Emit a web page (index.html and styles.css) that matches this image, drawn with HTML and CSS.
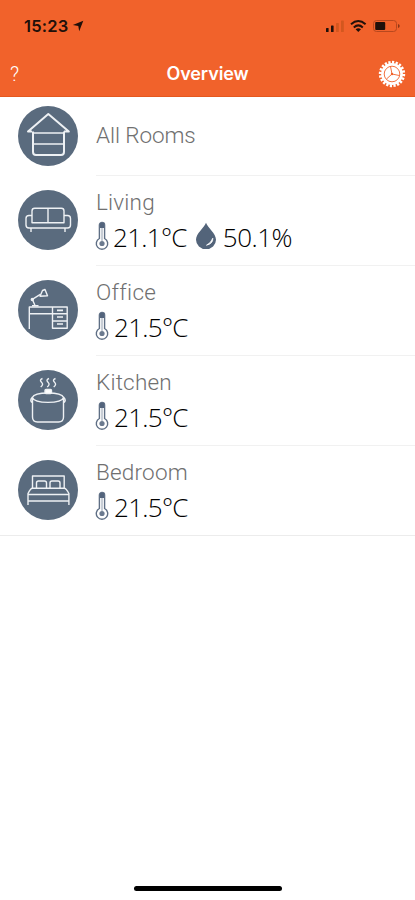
FILE: index.html
```html
<!DOCTYPE html>
<html lang="en">
<head>
<meta charset="utf-8">
<title>Overview</title>
<link rel="stylesheet" href="styles.css">
</head>
<body>
<svg class="defs" width="0" height="0">
  <symbol id="thermo" viewBox="0 0 14 30">
    <path d="M4.400 17.500V4a2.600 2.600 0 0 1 5.200 0v13.500a5.700 5.700 0 1 1-5.200 0z" fill="#fff" stroke="#5f6f85" stroke-width="1.400"/>
    <path d="M7 2v5" stroke="#53647c" stroke-width="4"/>
    <path d="M7 7v13" stroke="#a3adbb" stroke-width="1.200"/>
    <circle cx="7" cy="22.500" r="2.600" fill="#6b7a8f"/>
  </symbol>
</svg>
<header class="header">
  <div class="status">
    <span class="time">15:23</span>
    <svg class="loc" width="12" height="12" viewBox="0 0 12 12"><path d="M11.300.8 7.200 11.200 6.300 5.900.8 5z"/></svg>
    <svg class="indicators" width="76" height="16" viewBox="0 0 76 16">
      <g fill="#20100a"><rect x="1" y="10" width="2.600" height="4" rx=".6"/><rect x="6" y="7.500" width="2.600" height="6.500" rx=".6"/></g>
      <g fill="#d3571f"><rect x="11" y="5" width="2.800" height="9" rx=".6"/><rect x="16" y="2.500" width="2.800" height="11.500" rx=".6"/></g>
      <g fill="none" stroke="#20100a" stroke-width="2"><path d="M26 6.200q7.300-6.400 14.600 0"/><path d="M28.800 9.400q4.500-4 9 0"/></g>
      <path d="M30.600 11.300q2.700-2 5.400 0l-2.700 2.700z" fill="#20100a"/>
      <rect x="48.500" y="2.500" width="23" height="11" rx="3" fill="none" stroke="#b8481e"/>
      <rect x="50.200" y="4" width="10" height="8" rx="1" fill="#20100a"/>
      <path d="M73 6v4q1.700-.5 1.700-2t-1.700-2z" fill="#8d3514"/>
    </svg>
  </div>
  <div class="nav">
    <span class="help">?</span>
    <h1 class="title">Overview</h1>
    <svg class="gear" width="28" height="28" viewBox="0 0 28 28">
      <circle cx="14" cy="14" r="11.700" fill="none" stroke="#fff" stroke-width="3" pathLength="80" stroke-dasharray="2.400 1.600"/>
      <circle cx="14" cy="14" r="10.900" fill="#fff"/>
      <g fill="none" stroke="#f1622b" stroke-width=".9"><circle cx="14" cy="14" r="7.800"/><path d="M14 14 12.500 6.500M14 14l7.300 1.500M14 14l-5.500 5"/></g>
      <circle cx="14" cy="14" r="1.200" fill="#f1622b"/>
    </svg>
  </div>
</header>
<main class="rooms">
  <section class="room room-all">
    <svg class="icon" viewBox="0 0 60 60"><circle class="disc" cx="30" cy="30" r="30"/><g stroke-width="2"><path d="M14 25.500H10L30.300 8 50.800 25.500H46"/><path d="M15 25.500V46q0 3 3 3h25q3 0 3-3V25.500"/><path d="M15 27h31M15 38h31" stroke-width="1.500"/></g></svg>
    <div class="info"><h2 class="name n-all">All Rooms</h2></div>
  </section>
  <section class="room">
    <svg class="icon" viewBox="0 0 60 60"><circle class="disc" cx="30" cy="30" r="30"/><path d="M14 32.700V21q0-2.700 2.700-2.700h26.600q2.700 0 2.700 2.700v11.700zM30 18.300v14.400"/><path d="M14 25.500h-3q-3 0-3 3V35q0 3 3 3h38.500q3 0 3-3v-6.500q0-3-3-3H46M13 38v4M47 38v4"/></svg>
    <div class="info"><h2 class="name">Living</h2>
      <div class="values"><svg class="thermo"><use href="#thermo"/></svg><span class="temp temp-tight">21.1°C</span><svg class="drop" width="22" height="28" viewBox="0 0 22 28"><path d="M11 .8C9.500 5.500 1 11.500 1 17.800a10 9.300 0 0 0 20 0C21 11.500 12.500 5.500 11 .8z" fill="#53647a"/><path d="M17.800 16.200q.4 5.400-6.300 7 4.500-2.200 6.300-7z" fill="#fff" stroke="#fff" stroke-width=".8"/></svg><span class="hum">50.1%</span></div></div>
  </section>
  <section class="room">
    <svg class="icon" viewBox="0 0 60 60"><circle class="disc" cx="30" cy="30" r="30"/><path d="M11.300 49V27h37.900v21.300H34.500V27M11.300 33.700h37.900M34.500 41h14.700"/><path d="M39 30.300h6M39 37h6M39 44h6" stroke-width="1.700"/><path d="M14 25.800h6.500M17 25.500l-2.700-6.200 8-5"/><circle cx="14.300" cy="19.500" r="1" fill="#fff"/><path d="M24.500 10.500 22 16.200l7.500-.4L27 9.500z"/></svg>
    <div class="info"><h2 class="name n-office">Office</h2>
      <div class="values"><svg class="thermo"><use href="#thermo"/></svg><span class="temp">21.5°C</span></div></div>
  </section>
  <section class="room">
    <svg class="icon" viewBox="0 0 60 60"><circle class="disc" cx="30" cy="30" r="30"/><path d="M24.500 8.500q-3.500 1.500-1 3.700t-.8 4.800M31 8.500q-3.500 1.500-1 3.700t-.8 4.800M37.500 8.500q-3.500 1.500-1 3.700t-.8 4.800"/><path d="M14.300 27.500C17 21.500 43 21.500 45.700 27.500 43 34 17 34 14.300 27.500zM14.500 27.500V47q0 5 5 5h21q5 0 5-5V27.500M14.500 27q-3.500 3.500 0 6M45.500 27q3.500 3.500 0 6"/><rect x="27" y="19.500" width="6.500" height="4" rx="1" fill="#fff"/></svg>
    <div class="info"><h2 class="name">Kitchen</h2>
      <div class="values"><svg class="thermo"><use href="#thermo"/></svg><span class="temp">21.5°C</span></div></div>
  </section>
  <section class="room room-last">
    <svg class="icon" viewBox="0 0 60 60"><circle class="disc" cx="30" cy="30" r="30"/><path d="M14.500 28.300V16h31.700v12.300"/><path d="M18.500 28.300V23q0-2 2-2h6q2 0 2 2v5.300M32 28.300V23q0-2 2-2h6q2 0 2 2v5.300"/><path d="M10 45V33.500q2.500-5.200 4.500-5.200h31.700q2 0 4.700 5.200V45M10 34.500h40.900M10 41h40.900"/></svg>
    <div class="info"><h2 class="name">Bedroom</h2>
      <div class="values"><svg class="thermo"><use href="#thermo"/></svg><span class="temp">21.5°C</span></div></div>
  </section>
</main>
<footer class="home"><div class="home-bar"></div></footer>
</body>
</html>
```
FILE: styles.css
```css
* { box-sizing: border-box; }
body {
  margin: 0;
  height: 900px;
  display: flex;
  flex-direction: column;
  background: #fff;
  font-family: Roboto, "Liberation Sans", sans-serif;
  overflow: hidden;
}
.defs { display: none; }
.header {
  height: 97px;
  background: #f1622b;
  border-bottom: 1px solid #e4581f;
}
.status {
  display: flex;
  align-items: center;
  height: 50px;
  padding: 2px 14px 0 24px;
}
.time {
  font: 600 16.500px/20px Inter, sans-serif;
  letter-spacing: 0.2px;
  color: #20100a;
}
.loc { margin-left: 4px; fill: #20100a; }
.indicators { margin-left: auto; }
.nav {
  display: grid;
  grid-template-columns: 40px 1fr 40px;
  align-items: center;
  height: 47px;
}
.help {
  padding-left: 10px;
  font: 300 20px/24px Roboto, sans-serif;
  color: #fff;
}
.title {
  margin: 0;
  text-align: center;
  font: 600 18px/24px Inter, sans-serif;
  letter-spacing: -0.1px;
  color: #fff;
}
.gear { margin-left: 3px; }
.rooms { flex: 1; }
.room {
  display: flex;
  height: 90px;
  padding-left: 18px;
}
.room-all { height: 79px; }
.room-last { border-bottom: 1px solid #ececec; }
.icon {
  flex: none;
  width: 60px;
  height: 60px;
  margin-top: 14px;
  fill: none;
  stroke: #eef1f4;
  stroke-width: 1.4;
  stroke-linejoin: round;
}
.room-all .icon { margin-top: 9px; }
.disc { fill: #5a6b7e; stroke: none; }
.info {
  flex: 1;
  margin-left: 18px;
  padding-top: 12px;
  border-bottom: 1px solid #f1f1f1;
}
.room-all .info { padding-top: 24px; }
.room-last .info { border-bottom: 0; }
.name {
  margin: 0;
  font-size: 22.5px;
  line-height: 28px;
  font-weight: 300;
  letter-spacing: 0.2px;
  font-variant-ligatures: none;
  color: #707070;
}
.n-all { letter-spacing: -0.1px; }
.n-office { letter-spacing: 0.3px; }
.values {
  display: flex;
  align-items: center;
  height: 36px;
  margin-top: 3px;
  font: 350 26px/36px "Open Sans", "Noto Sans", sans-serif;
  color: #000;
}
.thermo { width: 14px; height: 30px; margin: -3px 4px 0 -1px; }
.temp { margin-left: 1px; letter-spacing: -0.7px; }
.temp-tight { margin-left: 0; }
.drop { margin: -3px 6px 0 8px; }
.hum { letter-spacing: -0.5px; }
.home {
  display: flex;
  justify-content: center;
  height: 14px;
}
.home-bar {
  width: 148px;
  height: 5px;
  border-radius: 3px;
  background: #000;
}
```
